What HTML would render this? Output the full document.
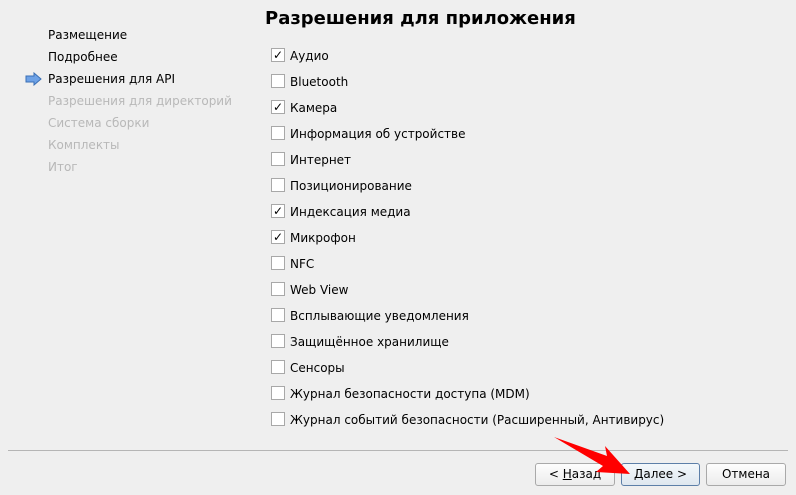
<!DOCTYPE html><html><head><meta charset="utf-8"><style>
body{margin:0;width:796px;height:495px;background:#efefef;font-family:"DejaVu Sans","Liberation Sans",sans-serif;font-size:12px;color:#000;position:relative;overflow:hidden}
.a{position:absolute;white-space:nowrap}
.g{color:#b8b8b8}
.cb{position:absolute;left:271px;width:12px;height:12px;border:1px solid #a8a8a8;background:#fff;font-size:12px;line-height:12px;text-align:center;font-weight:bold}
.btn{position:absolute;top:463px;height:21px;border:1px solid #a9a9a9;border-radius:3px;background:linear-gradient(#fdfdfd,#ececec);text-align:center;line-height:21px;font-size:12px}
</style></head><body>
<div class="a" style="left:265px;top:8px;font-size:18px;font-weight:bold">Разрешения для приложения</div>
<div class="a" style="left:48px;top:28px">Размещение</div>
<div class="a" style="left:48px;top:50px">Подробнее</div>
<svg class="a" style="left:25px;top:72px" width="18" height="14"><path d="M1 4H9V1L16 7L9 13V10H1Z" fill="#6ea2e6" stroke="#3a6fb5"/></svg>
<div class="a" style="left:48px;top:72px">Разрешения для API</div>
<div class="a g" style="left:48px;top:94px">Разрешения для директорий</div>
<div class="a g" style="left:48px;top:116px">Система сборки</div>
<div class="a g" style="left:48px;top:138px">Комплекты</div>
<div class="a g" style="left:48px;top:160px">Итог</div>

<div class="cb" style="top:48px">✓</div><div class="a" style="left:290px;top:49px">Аудио</div>
<div class="cb" style="top:74px"></div><div class="a" style="left:290px;top:75px">Bluetooth</div>
<div class="cb" style="top:100px">✓</div><div class="a" style="left:290px;top:101px">Камера</div>
<div class="cb" style="top:126px"></div><div class="a" style="left:290px;top:127px">Информация об устройстве</div>
<div class="cb" style="top:152px"></div><div class="a" style="left:290px;top:153px">Интернет</div>
<div class="cb" style="top:178px"></div><div class="a" style="left:290px;top:179px">Позиционирование</div>
<div class="cb" style="top:204px">✓</div><div class="a" style="left:290px;top:205px">Индексация медиа</div>
<div class="cb" style="top:230px">✓</div><div class="a" style="left:290px;top:231px">Микрофон</div>
<div class="cb" style="top:256px"></div><div class="a" style="left:290px;top:257px">NFC</div>
<div class="cb" style="top:282px"></div><div class="a" style="left:290px;top:283px">Web View</div>
<div class="cb" style="top:308px"></div><div class="a" style="left:290px;top:309px">Всплывающие уведомления</div>
<div class="cb" style="top:334px"></div><div class="a" style="left:290px;top:335px">Защищённое хранилище</div>
<div class="cb" style="top:360px"></div><div class="a" style="left:290px;top:361px">Сенсоры</div>
<div class="cb" style="top:386px"></div><div class="a" style="left:290px;top:387px">Журнал безопасности доступа (MDM)</div>
<div class="cb" style="top:412px"></div><div class="a" style="left:290px;top:413px">Журнал событий безопасности (Расширенный, Антивирус)</div>

<div class="a" style="left:8px;top:450px;width:780px;height:1px;background:#b5b5b5"></div>
<div class="btn" style="left:535px;width:78px">&lt; <u>Н</u>азад</div>
<div class="btn" style="left:621px;width:77px;border-color:#5d7fa8;background:linear-gradient(#f4f8fb,#dfe7ef)"><u>Д</u>алее &gt;</div>
<div class="btn" style="left:706px;width:78px">Отмена</div>
<svg class="a" style="left:0;top:0" width="796" height="495"><path d="M554 437L607 456L605 446L630 474L596 472L603 466Z" fill="#f00"/></svg>
</body></html>
